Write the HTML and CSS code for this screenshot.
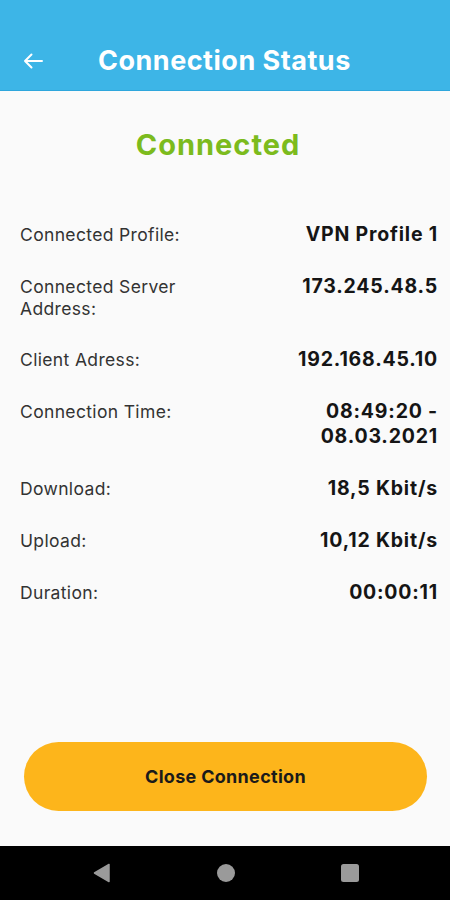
FILE: index.html
```html
<!DOCTYPE html>
<html lang="en">
<head>
<meta charset="utf-8">
<title>Connection Status</title>
<link rel="stylesheet" href="styles.css">
</head>
<body>
<div class="app">
  <header class="header">
    <div class="toolbar">
      <svg class="back" width="20" height="16" viewBox="0 0 20 16" aria-hidden="true">
        <path d="M19 8H2M8.5 1.5L2 8l6.5 6.5" fill="none" stroke="#fff" stroke-width="2" stroke-linecap="round" stroke-linejoin="round"/>
      </svg>
      <h1 class="title">Connection Status</h1>
    </div>
  </header>
  <main class="content">
    <h2 class="status">Connected</h2>
    <div class="rows">
      <div class="row"><div class="label">Connected Profile:</div><div class="value">VPN Profile 1</div></div>
      <div class="row"><div class="label">Connected Server<br>Address:</div><div class="value">173.245.48.5</div></div>
      <div class="row"><div class="label">Client Adress:</div><div class="value">192.168.45.10</div></div>
      <div class="row"><div class="label">Connection Time:</div><div class="value">08:49:20 -<br>08.03.2021</div></div>
      <div class="row"><div class="label">Download:</div><div class="value">18,5 Kbit/s</div></div>
      <div class="row"><div class="label">Upload:</div><div class="value">10,12 Kbit/s</div></div>
      <div class="row"><div class="label">Duration:</div><div class="value">00:00:11</div></div>
    </div>
    <div class="actions">
      <button class="close-btn">Close Connection</button>
    </div>
  </main>
  <nav class="navbar">
    <svg width="20" height="20" viewBox="0 0 20 20" aria-hidden="true"><path d="M17 1.5v17L2.5 10z" fill="#9a9a9a" stroke="#9a9a9a" stroke-width="1.5" stroke-linejoin="round"/></svg>
    <svg width="20" height="20" viewBox="0 0 20 20" aria-hidden="true"><circle cx="10" cy="10" r="9" fill="#9a9a9a"/></svg>
    <svg width="20" height="20" viewBox="0 0 20 20" aria-hidden="true"><rect x="1" y="1" width="18" height="18" rx="2.5" fill="#9a9a9a"/></svg>
  </nav>
</div>
</body>
</html>
```
FILE: styles.css
```css
* { box-sizing: border-box; }
html, body { margin: 0; padding: 0; }
body {
  font-family: Inter, "Noto Sans", sans-serif;
  background: #fafafa;
  color: #222;
}
.app {
  width: 450px;
  height: 900px;
  display: flex;
  flex-direction: column;
}
.header {
  height: 91px;
  background: #3db5e7;
  border-bottom: 1px solid #2ea6dc;
  padding-top: 30px;
}
.toolbar {
  height: 60px;
  display: flex;
  align-items: center;
  padding-left: 23px;
}
.back { flex: none; margin-top: 1px; }
.title {
  margin: 0 0 0 55px;
  color: #fff;
  font-size: 27px;
  font-weight: 700;
  letter-spacing: 0.5px;
}
.content {
  flex: 1;
  display: flex;
  flex-direction: column;
  padding: 0 12px 0 20px;
}
.status {
  margin: 31px 22px 0 0;
  text-align: center;
  color: #7cbb1d;
  font-size: 29px;
  font-weight: 700;
  line-height: 46px;
  letter-spacing: 1px;
}
.rows {
  margin-top: 54px;
  display: flex;
  flex-direction: column;
  gap: 27px;
}
.row {
  display: flex;
  justify-content: space-between;
  align-items: flex-start;
}
.label {
  font-size: 17.5px;
  line-height: 22px;
  color: #333;
  padding-top: 2px;
  letter-spacing: 0.35px;
}
.value {
  font-size: 19.5px;
  line-height: 25px;
  font-weight: 700;
  color: #151515;
  text-align: right;
  letter-spacing: 0.8px;
}
.actions {
  margin-top: auto;
  padding: 0 11px 35px 4px;
}
.close-btn {
  width: 100%;
  height: 69px;
  border: none;
  border-radius: 35px;
  background: #fdb51b;
  color: #1a1a1a;
  font-family: Inter, "Noto Sans", sans-serif;
  font-size: 18px;
  font-weight: 700;
  letter-spacing: 0.3px;
}
.navbar {
  height: 54px;
  background: #000;
  display: flex;
  justify-content: center;
  align-items: center;
  gap: 104px;
  padding-left: 1px;
}
```
